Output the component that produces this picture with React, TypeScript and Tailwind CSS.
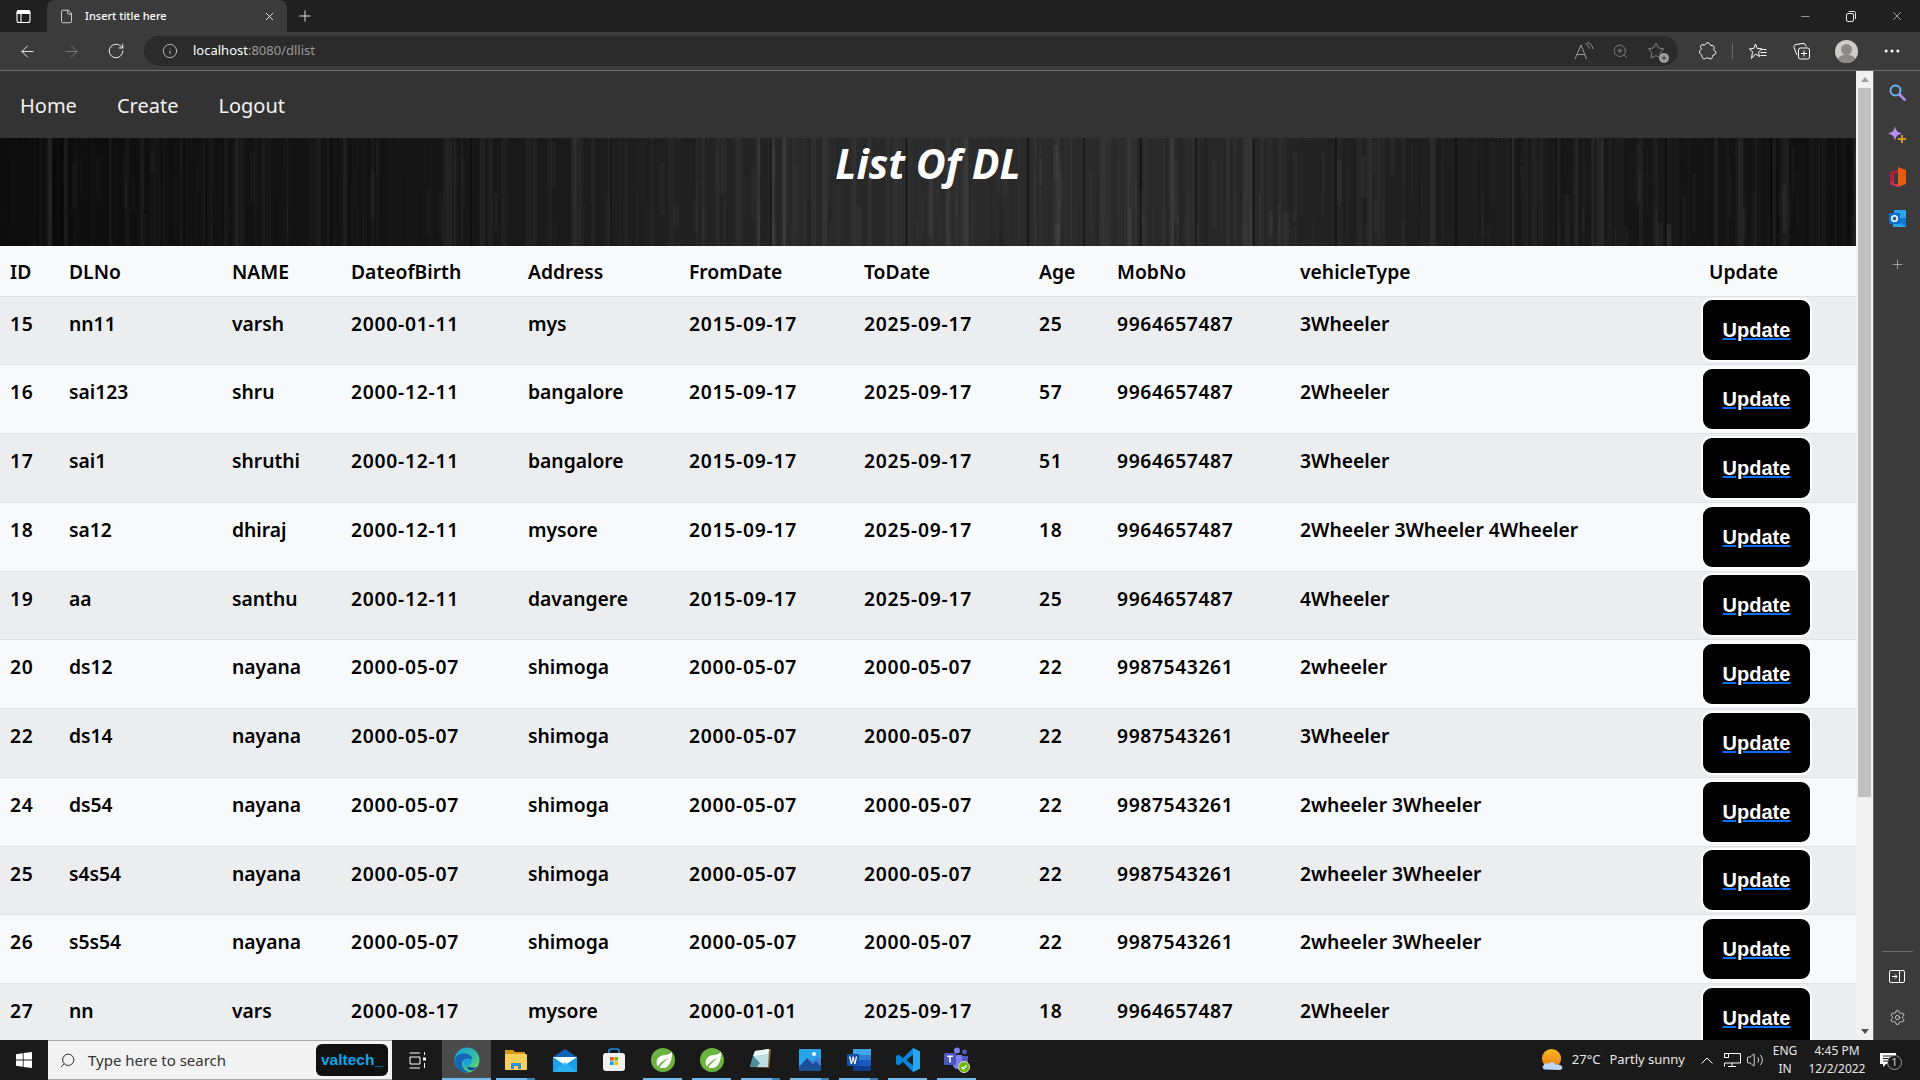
import {
  ArrowLeft,
  ArrowRight,
  Ellipsis,
  File,
  Info,
  Minus,
  Plus,
  RotateCw,
  Search,
  Settings,
  Star,
  Volume2,
  X,
  ZoomIn,
} from "lucide-react";

type Row = {
  id: number;
  dl: string;
  name: string;
  dob: string;
  address: string;
  from: string;
  to: string;
  age: number;
  mob: string;
  vehicle: string;
};

const rows: Row[] = [
  { id: 15, dl: "nn11", name: "varsh", dob: "2000-01-11", address: "mys", from: "2015-09-17", to: "2025-09-17", age: 25, mob: "9964657487", vehicle: "3Wheeler" },
  { id: 16, dl: "sai123", name: "shru", dob: "2000-12-11", address: "bangalore", from: "2015-09-17", to: "2025-09-17", age: 57, mob: "9964657487", vehicle: "2Wheeler" },
  { id: 17, dl: "sai1", name: "shruthi", dob: "2000-12-11", address: "bangalore", from: "2015-09-17", to: "2025-09-17", age: 51, mob: "9964657487", vehicle: "3Wheeler" },
  { id: 18, dl: "sa12", name: "dhiraj", dob: "2000-12-11", address: "mysore", from: "2015-09-17", to: "2025-09-17", age: 18, mob: "9964657487", vehicle: "2Wheeler 3Wheeler 4Wheeler" },
  { id: 19, dl: "aa", name: "santhu", dob: "2000-12-11", address: "davangere", from: "2015-09-17", to: "2025-09-17", age: 25, mob: "9964657487", vehicle: "4Wheeler" },
  { id: 20, dl: "ds12", name: "nayana", dob: "2000-05-07", address: "shimoga", from: "2000-05-07", to: "2000-05-07", age: 22, mob: "9987543261", vehicle: "2wheeler" },
  { id: 22, dl: "ds14", name: "nayana", dob: "2000-05-07", address: "shimoga", from: "2000-05-07", to: "2000-05-07", age: 22, mob: "9987543261", vehicle: "3Wheeler" },
  { id: 24, dl: "ds54", name: "nayana", dob: "2000-05-07", address: "shimoga", from: "2000-05-07", to: "2000-05-07", age: 22, mob: "9987543261", vehicle: "2wheeler 3Wheeler" },
  { id: 25, dl: "s4s54", name: "nayana", dob: "2000-05-07", address: "shimoga", from: "2000-05-07", to: "2000-05-07", age: 22, mob: "9987543261", vehicle: "2wheeler 3Wheeler" },
  { id: 26, dl: "s5s54", name: "nayana", dob: "2000-05-07", address: "shimoga", from: "2000-05-07", to: "2000-05-07", age: 22, mob: "9987543261", vehicle: "2wheeler 3Wheeler" },
  { id: 27, dl: "nn", name: "vars", dob: "2000-08-17", address: "mysore", from: "2000-01-01", to: "2025-09-17", age: 18, mob: "9964657487", vehicle: "2Wheeler" },
];

const headers = ["ID", "DLNo", "NAME", "DateofBirth", "Address", "FromDate", "ToDate", "Age", "MobNo", "vehicleType"];

// fixed pseudo random grain so the wood looks the same on every load
function makeGrain() {
  let seed = 7;
  const rnd = () => {
    seed = (seed * 16807) % 2147483647;
    return seed / 2147483647;
  };
  const out: { x: number; w: number; o: number; y: number; h: number; light: boolean }[] = [];
  for (let i = 0; i < 800; i++) {
    const tall = rnd() > 0.35;
    out.push({
      x: rnd() * 1856,
      w: 1 + rnd() * 5,
      o: 0.012 + rnd() * 0.03,
      y: tall ? 0 : rnd() * 90,
      h: tall ? 108 : 20 + rnd() * 50,
      light: rnd() > 0.5,
    });
  }
  return out;
}

const grain = makeGrain();
const seams = [60, 205, 330, 470, 610, 770, 905, 1027, 1083, 1140, 1195, 1253, 1335, 1455, 1510, 1555, 1665, 1770];

function WoodBanner() {
  return (
    <svg className="absolute inset-0 h-full w-full" viewBox="0 0 1856 108" preserveAspectRatio="none">
      <defs>
        <linearGradient id="wood" x1="0" x2="1" y1="0" y2="0">
          <stop offset="0" stopColor="#0d0d0d" />
          <stop offset="0.25" stopColor="#171717" />
          <stop offset="0.4" stopColor="#242424" />
          <stop offset="0.5" stopColor="#2b2b2b" />
          <stop offset="0.62" stopColor="#2a2a2a" />
          <stop offset="0.85" stopColor="#181818" />
          <stop offset="1" stopColor="#101010" />
        </linearGradient>
      </defs>
      <rect width="1856" height="108" fill="url(#wood)" />
      {grain.map((g, i) => (
        <rect key={i} x={g.x} y={g.y} width={g.w} height={g.h} fill={g.light ? "#ffffff" : "#000000"} opacity={g.o} />
      ))}
      {seams.map((x) => (
        <rect key={x} x={x} y="0" width="2" height="108" fill="#000000" opacity="0.4" />
      ))}
    </svg>
  );
}

function WindowsLogo() {
  return (
    <svg width="16" height="16" viewBox="0 0 16 16" fill="#ffffff">
      <path d="M0 2.2 6.8 1.2V7.6H0ZM7.6 1.1 16 0V7.6H7.6ZM0 8.4H6.8V14.8L0 13.8ZM7.6 8.4H16V16L7.6 14.9Z" />
    </svg>
  );
}

function EdgeIcon() {
  return (
    <svg width="26" height="26" viewBox="0 0 26 26">
      <defs>
        <linearGradient id="edgeTop" x1="0" x2="1" y1="0" y2="1">
          <stop offset="0" stopColor="#1b9de2" />
          <stop offset="0.6" stopColor="#35c1a0" />
          <stop offset="1" stopColor="#7ee05f" />
        </linearGradient>
      </defs>
      <circle cx="13" cy="13" r="12.5" fill="url(#edgeTop)" />
      <path d="M1 14C1 8 6 6 11 6.500 16 7 19 10 18 13 15 11 9 11 8 16 7.500 20 11 24 15 25 7 27 1 21 1 14Z" fill="#1368b8" />
      <path d="M10 15C10 12 13 11 15.500 12 18 13 18 15 17.500 16 16 18 13 18 12 20.500 10.500 19 10 17 10 15Z" fill="#19a0dc" />
      <path d="M13 21C15 24 20 24 23 20 21 21 17 21 15 19.500Z" fill="#0b3f8f" />
    </svg>
  );
}

function FolderIcon() {
  return (
    <svg width="24" height="22" viewBox="0 0 24 22">
      <path d="M1 1H9L11 3H21V6H1Z" fill="#d89a14" />
      <rect x="1" y="5" width="22" height="16" rx="1" fill="#f7cf5c" />
      <path d="M7 20V14H17V20H14V17H10V20Z" fill="#2f8fd6" />
    </svg>
  );
}

function MailIcon() {
  return (
    <svg width="24" height="23" viewBox="0 0 24 23">
      <path d="M0 8 12 0 24 8V12H0Z" fill="#0f62b5" />
      <rect x="0" y="8" width="24" height="15" fill="#1ba0e8" />
      <path d="M0 8H24L12 16Z" fill="#ffffff" />
      <path d="M0 23 12 13 24 23Z" fill="#31b5f2" opacity="0.75" />
    </svg>
  );
}

function StoreIcon() {
  return (
    <svg width="24" height="24" viewBox="0 0 24 24">
      <path d="M7 6V3C7 1.500 8 1 9 1H15C16 1 17 1.500 17 3V6" fill="none" stroke="#1b8fe0" strokeWidth="1.600" />
      <rect x="1" y="5" width="22" height="18" rx="3" fill="#f1f1f1" />
      <rect x="8" y="9" width="3.600" height="3.600" fill="#f25022" />
      <rect x="12.400" y="9" width="3.600" height="3.600" fill="#7fba00" />
      <rect x="8" y="13.400" width="3.600" height="3.600" fill="#00a4ef" />
      <rect x="12.400" y="13.400" width="3.600" height="3.600" fill="#ffb900" />
    </svg>
  );
}

function SpringIcon() {
  return (
    <svg width="24" height="24" viewBox="0 0 24 24">
      <circle cx="12" cy="12" r="12" fill="#6db33f" />
      <path d="M21 3.500C19 7 15 6.500 11 7.500 6 9 4.500 14 6.500 18 8.500 20.500 14 21 17 18 20 15 21.500 9 21 3.500Z" fill="#ffffff" />
      <path d="M6 20C9 14 13 12 18 10 14 13 10 16 8 20Z" fill="#6db33f" />
    </svg>
  );
}

function NotepadIcon() {
  return (
    <svg width="24" height="24" viewBox="0 0 24 24">
      <path d="M7 3 22 1 20 20 2 19Z" fill="#8a6a3a" />
      <path d="M6 3 20 1 19 19 1 19Z" fill="#bcdde3" />
      <path d="M6 3 20 1 19 6 4 8Z" fill="#eef7f8" />
      <path d="M1 19 4 8 11 15 8 19Z" fill="#4f8f9b" />
    </svg>
  );
}

function PhotosIcon() {
  return (
    <svg width="22" height="22" viewBox="0 0 22 22">
      <rect width="22" height="22" rx="1" fill="#2aa3e8" />
      <circle cx="15" cy="5" r="2" fill="#ffffff" />
      <path d="M0 18 8 9 14 15 17 12 22 17V22H0Z" fill="#1c4f94" />
      <path d="M8 9 14 15 17 12 22 17V10L18 8 14 12Z" fill="#4b74d6" opacity="0.7" />
    </svg>
  );
}

function WordIcon() {
  return (
    <svg width="24" height="22" viewBox="0 0 24 22">
      <rect x="6" y="0" width="18" height="22" rx="1" fill="#2b7cd3" />
      <rect x="6" y="0" width="18" height="6" fill="#41a5ee" />
      <rect x="6" y="11" width="18" height="6" fill="#185abd" />
      <rect x="6" y="17" width="18" height="5" fill="#103f91" />
      <rect x="0" y="5" width="12" height="12" rx="1" fill="#1a4fa8" />
      <path d="M2 7.500H3.500L4.500 13 5.600 7.500H6.700L7.800 13 8.800 7.500H10.200L8.500 15H7.100L6.100 10 5.100 15H3.700Z" fill="#ffffff" />
    </svg>
  );
}

function VsCodeIcon() {
  return (
    <svg width="24" height="24" viewBox="0 0 24 24">
      <path d="M17 0 24 3.500V20.500L17 24 7 14 2.500 17.500 0 16V8L2.500 6.500 7 10ZM17 6.500 10.500 12 17 17.500Z" fill="#0a84d6" />
      <path d="M17 0 24 3.500V20.500L17 24Z" fill="#24a7ef" />
    </svg>
  );
}

function TeamsIcon() {
  return (
    <svg width="26" height="26" viewBox="0 0 26 26">
      <circle cx="13" cy="3.500" r="3" fill="#7b83eb" />
      <circle cx="20.500" cy="5" r="2.400" fill="#5059c9" />
      <path d="M9 8H18V18C18 21 15 22 13 22 11 22 9 20 9 18Z" fill="#7b83eb" />
      <path d="M18 9H24V16C24 18 22 19 20 19H18Z" fill="#5059c9" />
      <rect x="0" y="6" width="12" height="12" rx="1" fill="#4b53bc" />
      <path d="M3 8.500H9V10H6.800V15.500H5.200V10H3Z" fill="#ffffff" />
      <circle cx="20" cy="20" r="5.500" fill="#6bb700" stroke="#dddddd" />
      <path d="M17.500 20 19.300 22 22.500 18.300" fill="none" stroke="#ffffff" strokeWidth="1.400" />
    </svg>
  );
}

function WeatherIcon() {
  return (
    <svg width="23" height="24" viewBox="0 0 24 24">
      <defs>
        <linearGradient id="sun" x1="0" x2="0" y1="0" y2="1">
          <stop offset="0" stopColor="#f9b81f" />
          <stop offset="1" stopColor="#ee7a1c" />
        </linearGradient>
      </defs>
      <circle cx="11" cy="10.500" r="10" fill="url(#sun)" />
      <path d="M5 22C2 22 1 19.500 2.500 18 3 15.500 6 14.500 8 16 10 13.500 14.500 14 15 17 17 16 21 17 22 19 23 21 21 22.500 19 22.500Z" fill="#bcd7f2" />
    </svg>
  );
}

function TaskIcon({ children, underline, split }: { children: React.ReactNode; underline?: boolean; split?: boolean }) {
  return (
    <div className="relative flex h-10 w-[49px] items-center justify-center">
      {children}
      {underline && <div className="absolute right-[5px] bottom-0 left-[5px] h-[2px] bg-[#76b9ed]" />}
      {split && <div className="absolute right-[5px] bottom-0 h-[2px] w-[8px] bg-[#3c7fb1]" />}
    </div>
  );
}

function Taskbar() {
  return (
    <div className="flex h-10 shrink-0 items-center bg-[#1a1a1a] text-white">
      <div className="flex h-10 w-[48px] items-center justify-center">
        <WindowsLogo />
      </div>
      <div className="flex h-10 w-[344px] items-center border-y border-[#a8a8a8] bg-[#f2f2f2] pl-[11px]">
        <Search size={17} strokeWidth={1.3} className="-scale-x-100 text-[#222222]" />
        <span className="ml-[12px] text-[15px] text-[#333333]">Type here to search</span>
        <div className="mr-[4px] ml-auto flex h-[32px] w-[72px] items-center justify-center rounded-md bg-[#111111] font-['Liberation_Sans',sans-serif] text-[15.500px] font-bold text-[#12a5e6]">
          valtech_
        </div>
      </div>
      <div className="flex h-10 w-[50px] items-center justify-center">
        <svg width="17" height="17" viewBox="0 0 17 17" fill="none" stroke="#ffffff" strokeWidth="1">
          <path d="M0.500 1H11M0.500 16H11M1 5H11V12H1ZM15.500 0V3M15.500 11V16" />
          <rect x="14" y="5.500" width="3" height="3" fill="#ffffff" stroke="none" />
        </svg>
      </div>
      <div className="relative flex h-10 w-[49px] items-center justify-center bg-[#4a4a4a]">
        <EdgeIcon />
        <div className="absolute right-0 bottom-0 left-0 h-[2px] bg-[#76b9ed]" />
      </div>
      <TaskIcon underline split><FolderIcon /></TaskIcon>
      <TaskIcon><MailIcon /></TaskIcon>
      <TaskIcon><StoreIcon /></TaskIcon>
      <TaskIcon underline><SpringIcon /></TaskIcon>
      <TaskIcon underline><SpringIcon /></TaskIcon>
      <TaskIcon underline split><NotepadIcon /></TaskIcon>
      <TaskIcon underline split><PhotosIcon /></TaskIcon>
      <TaskIcon underline split><WordIcon /></TaskIcon>
      <TaskIcon underline><VsCodeIcon /></TaskIcon>
      <TaskIcon underline><TeamsIcon /></TaskIcon>

      <div className="ml-auto flex h-10 items-center">
        <WeatherIcon />
        <span className="ml-[8px] text-[13px] text-[#e8e8e8]">27°C</span>
        <span className="ml-[9px] text-[13px] text-[#e8e8e8]">Partly sunny</span>
        <svg className="ml-[16px]" width="12" height="7" viewBox="0 0 12 7" fill="none" stroke="#ffffff">
          <path d="M0.500 6.500 6 1 11.500 6.500" />
        </svg>
        <svg className="ml-[11px]" width="17" height="14" viewBox="0 0 17 14" fill="none" stroke="#ffffff">
          <path d="M3 3.500V0.500H16.500V10H0.500V13.500M8 10V13.500M4 13.500H12" />
          <rect x="0.500" y="0.500" width="4" height="4" fill="#1a1a1a" />
        </svg>
        <Volume2 size={18} strokeWidth={1.1} className="ml-[5px] text-white" />
        <div className="ml-[7px] flex w-[28px] flex-col items-center text-[12px] leading-[18px] text-[#e8e8e8]">
          <span>ENG</span>
          <span>IN</span>
        </div>
        <div className="ml-[8px] flex w-[60px] flex-col items-center text-[12px] leading-[18px] text-[#e8e8e8]">
          <span>4:45 PM</span>
          <span>12/2/2022</span>
        </div>
        <div className="relative mr-[22px] ml-[13px] flex h-10 w-[18px] items-center">
          <svg width="16" height="14" viewBox="0 0 16 14" fill="#ffffff">
            <path d="M0 0H16V11H6L3 14V11H0Z" />
            <path d="M3 3H13M3 5.500H13M3 8H10" stroke="#1a1a1a" />
          </svg>
          <div className="absolute top-[15px] left-[7px] flex h-[15px] w-[15px] items-center justify-center rounded-full border border-[#9a9a9a] bg-[#1a1a1a] text-[11px] text-[#d0d0d0]">
            1
          </div>
        </div>
      </div>
    </div>
  );
}

function BrowserChrome() {
  return (
    <>
      <div className="flex h-8 shrink-0 items-end bg-[#202020] text-white">
        <div className="flex h-8 w-[47px] items-center justify-center">
          <svg width="15" height="15" viewBox="0 0 15 15" fill="none" stroke="#ffffff" strokeWidth="1.100">
            <rect x="1" y="1.500" width="13" height="12" rx="2" />
            <path d="M1 4.500H14M5 4.500V13.500" />
            <path d="M1.500 2H13.500V4.500H1.500Z" fill="#ffffff" />
          </svg>
        </div>
        <div className="flex h-8 w-[240px] items-center rounded-t-lg bg-[#3b3b3b] pl-[12px]">
          <File size={15} strokeWidth={1.2} />
          <span className="ml-[11px] text-[11px] font-medium">Insert title here</span>
          <X size={13} strokeWidth={1.6} className="mr-[11px] ml-auto" />
        </div>
        <div className="flex h-8 w-[35px] items-center justify-center">
          <Plus size={18} strokeWidth={1.1} />
        </div>
        <div className="ml-auto flex h-8">
          <div className="flex w-[46px] items-center justify-center">
            <Minus size={13} strokeWidth={1} />
          </div>
          <div className="flex w-[46px] items-center justify-center">
            <svg width="10" height="11" viewBox="0 0 10 11" fill="none" stroke="#ffffff" strokeWidth="0.900">
              <rect x="0.500" y="2.500" width="7" height="8" rx="1.500" />
              <path d="M2.500 0.500H8C9 0.500 9.500 1 9.500 2V8" />
            </svg>
          </div>
          <div className="flex w-[46px] items-center justify-center">
            <X size={14} strokeWidth={1} />
          </div>
        </div>
      </div>
      <div className="flex h-[38px] shrink-0 items-center bg-[#3b3b3b] text-white">
        <ArrowLeft size={19} strokeWidth={1.1} className="ml-[18px]" />
        <ArrowRight size={19} strokeWidth={1.1} className="ml-[25px] text-[#808080]" />
        <RotateCw size={18} strokeWidth={1.2} className="ml-[26px]" />
        <div className="ml-[19px] flex h-[30px] w-[1534px] items-center rounded-full bg-[#2b2b2b] pl-[18px]">
          <Info size={16} strokeWidth={1.2} className="text-[#d8d8d8]" />
          <span className="ml-[15px] text-[13px] text-white">
            localhost<span className="text-[#9a9a9a]">:8080/dllist</span>
          </span>
          <div className="mr-[9px] ml-auto flex items-center gap-[16px] text-[#9a9a9a]">
            <svg width="22" height="18" viewBox="0 0 22 18" fill="none" stroke="currentColor" strokeWidth="1">
              <path d="M1 17 7 3 12.500 17M3 12.500H11" />
              <path d="M11 1.500C13.500 2.500 15 4.500 15.500 6.500M13 0.500C16 1 18.500 3.500 19 7" />
            </svg>
            <ZoomIn size={17} strokeWidth={1} />
            <div className="relative mr-[4px] ml-[2px]">
              <Star size={18} strokeWidth={1.1} />
              <div className="absolute right-[-4px] bottom-[-3px] flex h-[10px] w-[10px] items-center justify-center rounded-full bg-[#a0a0a0] text-[#2b2b2b]">
                <Plus size={8} strokeWidth={2.5} />
              </div>
            </div>
          </div>
        </div>
        <svg className="ml-[21px]" width="18" height="18" viewBox="0 0 18 18" fill="none" stroke="#ffffff" strokeWidth="1">
          <path d="M7 1.500C8 0.500 10.500 0.500 11 2.500 11 3.500 11.500 3.500 13 3.500 15 3.500 15.500 5 15 6.500 14.500 8 14.500 8 16 9 17.500 10.500 17 12.500 15 13 13.500 13.200 13.500 13.500 13.500 14.500 13.500 16.500 11.500 17.500 10 16.500 8.500 15.500 8 15.500 6.500 16.500 5 17.500 3 16.500 3 14.500 3 13 2.500 12.500 1.500 12 0 11 0.500 8.500 1.500 8 3 7 1.500 6 1.500 4.500 1.500 3 3.500 2.500 5 3 6 3.300 6 2.500 7 1.500Z" />
        </svg>
        <div className="ml-[15px] h-[16px] w-px bg-[#6a6a6a]" />
        <svg className="ml-[16px]" width="18" height="17" viewBox="0 0 18 17" fill="none" stroke="#ffffff" strokeWidth="1">
          <path d="M6.500 1 8.300 5.500 13 5.800 9.500 9 10.500 13.500 6.500 11 2.500 15.500 3.500 9 0.500 5.800 4.700 5.500Z" />
          <path d="M12 6.500H17.500M11.500 9.500H17.500M11.500 12.500H17.500" />
        </svg>
        <svg className="ml-[26px]" width="17" height="17" viewBox="0 0 17 17" fill="none" stroke="#ffffff" strokeWidth="1">
          <path d="M4 12 1 4.500C0.500 3 1.500 1.800 3 1.500L10 0.500C11.500 0.300 12.500 1 13 3.500" />
          <rect x="5.500" y="5" width="11" height="11" rx="2" />
          <path d="M11 7.500V13.500M8 10.500H14" />
        </svg>
        <div className="relative ml-[25px] h-[23px] w-[23px] overflow-hidden rounded-full bg-[#cfcdca]">
          <div className="absolute top-[4px] left-[6px] h-[11px] w-[11px] rounded-full bg-[#8c8a88]" />
          <div className="absolute top-[15px] left-[2px] h-[14px] w-[19px] rounded-full bg-[#8c8a88]" />
        </div>
        <Ellipsis size={20} strokeWidth={1.6} className="ml-[24px]" />
      </div>
      <div className="h-px shrink-0 bg-[#6e6e6e]" />
    </>
  );
}

function SideRail() {
  return (
    <div className="flex w-[47px] shrink-0 flex-col items-center border-l border-[#6a6a6a] bg-[#3b3b3b] pb-[14px] text-[#d8d8d8]">
      <svg className="mt-[13px]" width="17" height="17" viewBox="0 0 17 17" fill="none">
        <circle cx="6.500" cy="6.500" r="5" stroke="#69b4f5" strokeWidth="2" />
        <path d="M10.500 10.500 15.500 15.500" stroke="#b48cf0" strokeWidth="2.600" strokeLinecap="round" />
      </svg>
      <svg className="mt-[25px]" width="18" height="18" viewBox="0 0 18 18">
        <path d="M7 0C8 5 9.500 6.500 14 7.500 9.500 8.500 8 10 7 15 6 10 4.500 8.500 0 7.500 4.500 6.500 6 5 7 0Z" fill="#bc8cf5" />
        <path d="M14 9V17M10 13H18" stroke="#d69a1a" strokeWidth="2" />
      </svg>
      <svg className="mt-[23px]" width="17" height="20" viewBox="0 0 17 20">
        <path d="M9 0 17 3V17L9 20 1 17V6L9 3Z" fill="#e85b12" />
        <path d="M1 6 9 3V7L5 9V14L1 17Z" fill="#b81c3c" />
        <path d="M1 17 5 14 9 17V20Z" fill="#d12e66" />
        <rect x="5" y="6" width="4" height="11" fill="#3b3b3b" />
      </svg>
      <svg className="mt-[23px]" width="17" height="17" viewBox="0 0 17 17">
        <rect x="5" y="0" width="12" height="9" fill="#28a8ea" />
        <path d="M4 8H17V17H4Z" fill="#0f78d4" />
        <path d="M4 8 17 17H4Z" fill="#2ba3e6" />
        <rect x="0" y="3" width="11" height="11" rx="1" fill="#0d6dc4" />
        <circle cx="5.500" cy="8.500" r="2.800" fill="none" stroke="#ffffff" strokeWidth="1.500" />
      </svg>
      <Plus size={15} strokeWidth={1} className="mt-[30px]" />
      <div className="mt-auto h-px w-[31px] bg-[#6a6a6a]" />
      <svg className="mt-[18px]" width="16" height="13" viewBox="0 0 16 13" fill="none" stroke="#ffffff" strokeWidth="1">
        <rect x="0.500" y="0.500" width="15" height="12" rx="1.500" />
        <path d="M10.500 0.500V12.500M3 6.500H8M6 4.500 8 6.500 6 8.500" />
      </svg>
      <Settings size={17} strokeWidth={1} className="mt-[26px] text-white" />
    </div>
  );
}

function ScrollBar() {
  return (
    <div className="flex w-[17px] shrink-0 flex-col items-center bg-[#f1f1f1]">
      <div className="mt-[6px] h-0 w-0 border-x-[4px] border-b-[5px] border-x-transparent border-b-[#a3a3a3]" />
      <div className="mt-[6px] h-[709px] w-[13px] bg-[#c1c1c1]" />
      <div className="mt-auto mb-[6px] h-0 w-0 border-x-[4px] border-t-[5px] border-x-transparent border-t-[#505050]" />
    </div>
  );
}

export default function App() {
  return (
    <div className="flex h-screen flex-col overflow-hidden bg-white font-['Noto_Sans',sans-serif]">
      <BrowserChrome />
      <div className="flex min-h-0 flex-1">
        <div className="min-w-0 flex-1 overflow-hidden">
          <nav className="flex h-[67px] items-center gap-[40px] bg-[#333333] pt-[2px] pl-[20px] text-[20px] text-[#f2f2f2]">
            <a>Home</a>
            <a>Create</a>
            <a>Logout</a>
          </nav>
          <div className="relative h-[108px]">
            <WoodBanner />
            <h1 className="relative text-center text-[41px] leading-[50px] font-bold text-white italic">List Of DL</h1>
          </div>
          <table className="w-[1856px] table-fixed border-collapse bg-[#f8f9fa] text-[19.300px] font-semibold text-black">
            <colgroup>
              <col className="w-[59px]" />
              <col className="w-[163px]" />
              <col className="w-[119px]" />
              <col className="w-[177px]" />
              <col className="w-[161px]" />
              <col className="w-[175px]" />
              <col className="w-[175px]" />
              <col className="w-[78px]" />
              <col className="w-[183px]" />
              <col className="w-[411px]" />
              <col className="w-[155px]" />
            </colgroup>
            <thead>
              <tr className="h-[50px] border-b border-[#dee2e6]">
                {headers.map((h) => (
                  <th key={h} className="px-[10px] pt-[3px] text-left font-semibold">
                    {h}
                  </th>
                ))}
                <th className="px-[8px] pt-[3px] text-left font-semibold">Update</th>
              </tr>
            </thead>
            <tbody>
              {rows.map((r, i) => (
                <tr key={r.id} className={i % 2 === 0 ? "h-[68.750px] border-b border-[#dee2e6] bg-[#ecedef]" : "h-[68.750px] border-b border-[#dee2e6] bg-[#f8f9fa]"}>
                  <td className="px-[10px] pt-[13px] align-top tracking-[0.6px]">{r.id}</td>
                  <td className="px-[10px] pt-[13px] align-top">{r.dl}</td>
                  <td className="px-[10px] pt-[13px] align-top">{r.name}</td>
                  <td className="px-[10px] pt-[13px] align-top tracking-[0.75px]">{r.dob}</td>
                  <td className="px-[10px] pt-[13px] align-top">{r.address}</td>
                  <td className="px-[10px] pt-[13px] align-top tracking-[0.75px]">{r.from}</td>
                  <td className="px-[10px] pt-[13px] align-top tracking-[0.75px]">{r.to}</td>
                  <td className="px-[10px] pt-[13px] align-top tracking-[0.6px]">{r.age}</td>
                  <td className="px-[10px] pt-[13px] align-top tracking-[0.6px]">{r.mob}</td>
                  <td className="px-[10px] pt-[13px] align-top">{r.vehicle}</td>
                  <td className="p-0 align-middle">
                    <button className="flex h-[64px] w-[111px] items-center justify-center rounded-[11px] border-2 border-white bg-black font-['Liberation_Sans',sans-serif] text-[20px] font-bold text-white underline decoration-[#0d6efd] decoration-2">
                      Update
                    </button>
                  </td>
                </tr>
              ))}
            </tbody>
          </table>
        </div>
        <ScrollBar />
        <SideRail />
      </div>
      <Taskbar />
    </div>
  );
}
